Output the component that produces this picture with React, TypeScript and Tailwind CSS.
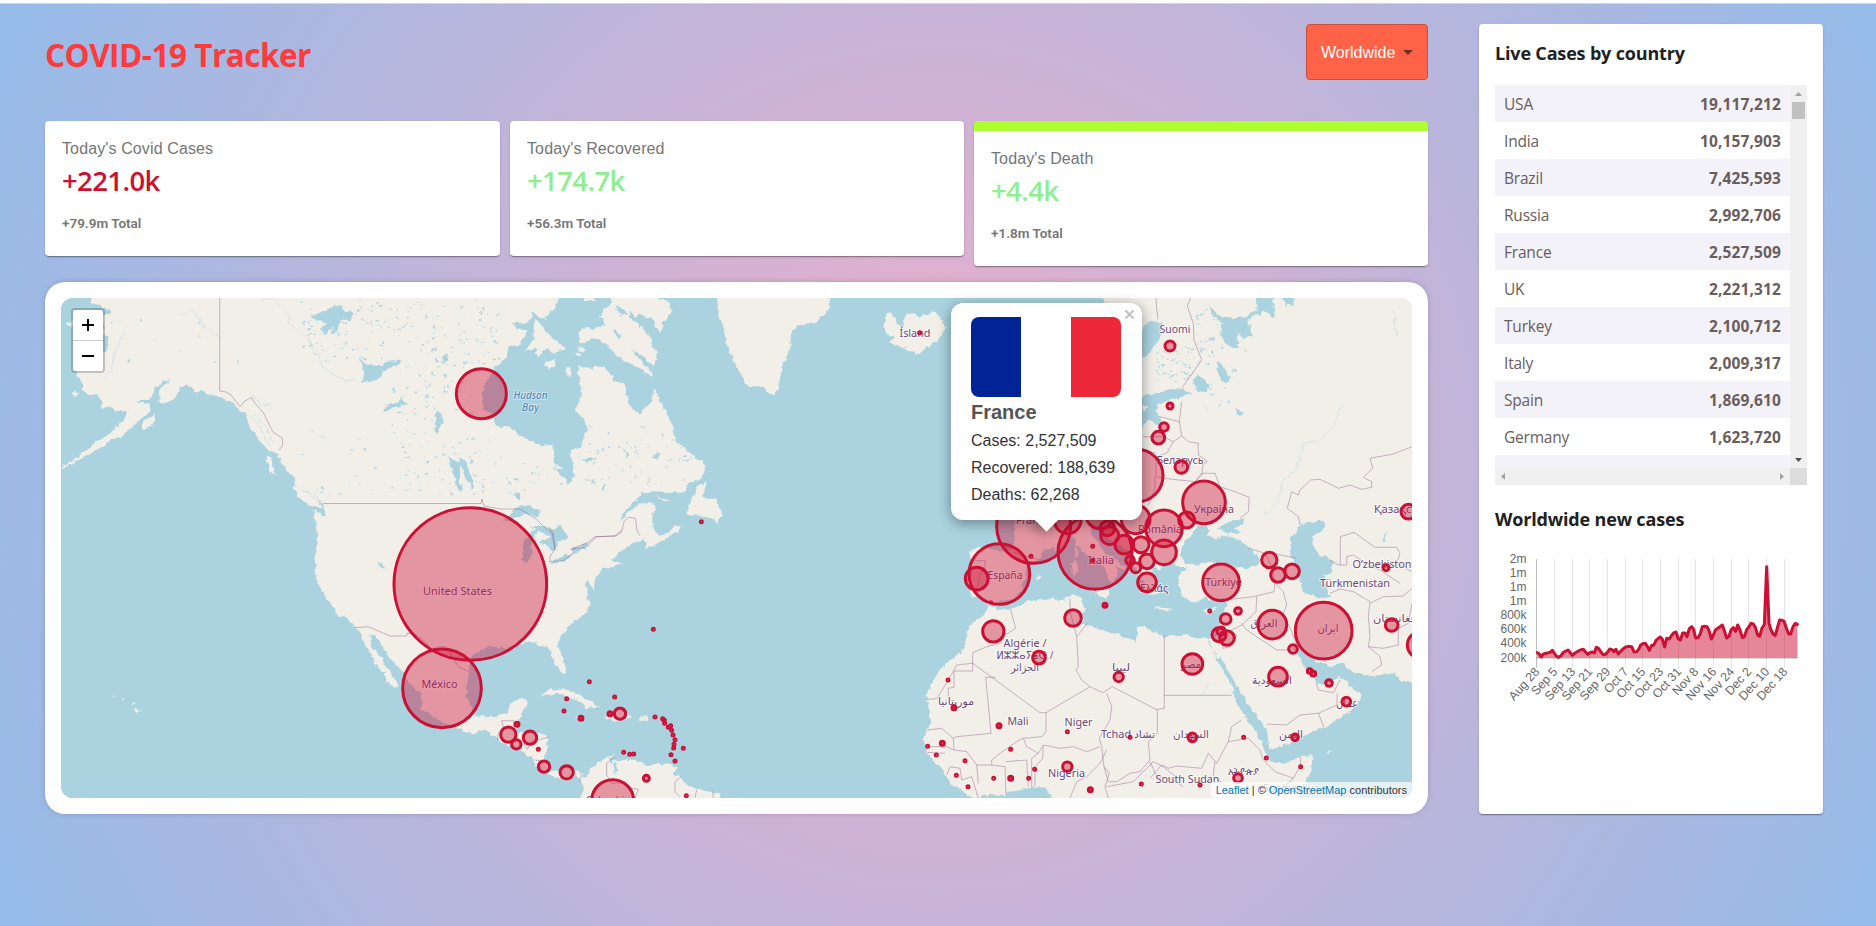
import React from "react";

const countries: [string, string][] = [
  ["USA", "19,117,212"],
  ["India", "10,157,903"],
  ["Brazil", "7,425,593"],
  ["Russia", "2,992,706"],
  ["France", "2,527,509"],
  ["UK", "2,221,312"],
  ["Turkey", "2,100,712"],
  ["Italy", "2,009,317"],
  ["Spain", "1,869,610"],
  ["Germany", "1,623,720"],
];

/* ---------- map geometry ---------- */
/* Shapes are listed per sheet. A sheet has an origin and is drawn at three units per pixel. */
type Sheet = keyof typeof sheets;
const sheets = {
  A: [40, 270],
  B: [440, 270],
  C: [240, 530],
  D: [900, 280],
  E: [1120, 290],
  F: [900, 520],
  G: [1150, 520],
  H: [30, 530],
};

function seg(s: Sheet, pts: string): string[] {
  const [ox, oy] = sheets[s];
  return pts
    .trim()
    .split(/\s+/)
    .map((p) => {
      const [x, y] = p.split(",").map(Number);
      return `${(ox + x / 3).toFixed(1)} ${(oy + y / 3).toFixed(1)}`;
    });
}
const area = (...parts: string[][]) => "M" + parts.flat().join("L") + "Z";
const line = (s: Sheet, pts: string) => "M" + seg(s, pts).join("L");

const americas = area(
  seg("A", "148,30 150,84 155,100 185,106 190,112 215,125 190,135 190,190 202,200 202,240 190,250 150,290 110,305 120,330 130,345 128,362 150,378 178,375 185,415 215,408 225,420 250,425 262,415 258,440 245,455 225,475 205,495 165,518 135,545 100,570 65,590 65,594 105,575 150,550 190,530 215,508 240,500 262,485 285,465 300,448 330,425 330,405 290,395 335,385 345,350 370,335 395,330 360,355 358,395 385,398 415,372 420,350 445,345 470,365 520,372 560,390 590,410 615,430 625,460 645,495 665,520 690,545 720,560 722,578 735,595 760,620 765,650 800,665 830,690 850,705 858,740 820,720 832,780 828,840"),
  seg("C", "222,70 225,130 233,160 245,180 258,200 275,225 290,252 315,262 345,285 355,305 375,345 398,372 400,395 435,430 440,455 455,462 465,478 475,472 472,460 460,445 445,420 425,385 410,370 395,345 388,312 410,315 420,335 432,362 450,385 475,410 490,432 500,450 540,490 548,515 545,535 570,555 600,573 630,585 665,600 700,610 735,598 770,625 790,640 830,655 850,665 880,690 890,710 925,730 935,740 955,740 985,752 1005,735 1020,745 1028,770 1025,830 1450,830 1440,790 1395,783 1370,780 1340,760 1325,740 1300,735 1310,715 1275,700 1230,705 1195,692 1160,685 1130,692 1112,700 1105,690 1128,672 1100,685 1070,700 1050,715 1042,740 1025,735 1000,718 975,712 955,725 935,718 915,695 918,660 925,625 900,610 870,607 840,612 825,605 830,590 842,560 845,545 860,525 862,508 830,508 808,520 800,550 770,560 740,562 715,558 700,545 682,500 680,450 690,420 688,395 700,378 735,355 765,350 790,360 830,345 870,335 905,345 925,350 935,375 945,400 965,430 977,428 975,400 955,350 960,320 985,290 1000,270 1030,260 1050,235 1052,215 1035,205 1050,195 1035,165 1042,150 1062,180 1065,145 1085,118 1120,108 1150,98 1118,92 1140,65 1175,45"),
  seg("B", "575,825 610,805 620,820 615,835 635,830 660,815 690,798 715,785 722,770 705,765 690,785 660,795 645,785 635,735 648,718 640,700 600,700 565,730 540,755 555,725 590,690 605,668 640,664 725,668 750,640 790,625 795,590 770,560 745,545 720,525 700,490 690,450 665,400 645,355 630,400 600,432 575,415 555,370 555,340 525,335 515,315 490,290 455,295 415,285 415,315 422,345 425,375 405,415 435,455 440,490 420,530 390,540 400,590 405,620 385,640 355,610 342,590 340,527 295,525 250,500 205,470 170,468 160,430 130,415 128,370 145,320 165,290 200,265 205,230 240,230 262,178 235,175 210,155 250,165 280,140 268,125 320,150 325,130 355,100 362,30"),
);

const oldWorld = area(
  seg("D", "600,20 612,60 620,110"),
  seg("E", "60,90 60,400 -20,560"),
  seg("F", "345,-30 345,60 335,90 300,92 240,82 212,92 212,110 225,118 215,150 205,190 215,225 240,235 262,248 265,258 250,285 205,320 200,365 180,400 140,425 110,465 85,510 78,540 90,570 90,620 68,655 80,685 90,715 120,740 150,785 180,810 215,834 235,838 270,822 300,828 345,810 400,802 440,803 460,850"),
  seg("G", "860,850 860,-760"),
);

const islands = [
  area(seg("A", "757,650 800,662 830,690 850,715 820,712 785,690")),
  area(seg("A", "675,560 695,560 697,590 710,617 690,600")),
  area(seg("A", "305,462 345,430 340,460 320,478 308,474")),
  area(seg("A", "90,370 105,362 120,372 105,380")),
  area(seg("A", "78,162 95,150 95,175")),
  area(seg("H", "315,530 333,540 318,552")),
  area(seg("H", "303,516 314,520 308,524")),
  area(seg("H", "275,502 285,507 277,511")),
  area(seg("H", "247,494 257,494 252,499")),
  area(seg("B", "285,150 275,215 258,245 290,235 292,262 320,235 345,248 375,238 350,215 320,185 300,155")),
  area(seg("B", "320,275 348,266 342,285 328,297 315,292")),
  area(seg("B", "380,290 393,295 387,318 376,305")),
  area(seg("B", "405,250 425,255 415,262")),
  area(seg("B", "410,228 438,245 430,252")),
  area(seg("B", "510,30 512,100 480,140 495,165 455,180 430,172 415,190 420,218 470,208 500,222 530,260 580,285 620,308 640,325 640,310 605,275 572,238 600,250 640,290 652,250 630,200 600,165 565,140 570,120 590,140 600,132 632,145 660,190 668,160 695,125 690,100 655,84 650,30")),
  area(seg("B", "428,30 475,30 465,92 435,95")),
  area(seg("B", "826,30 838,150 855,185 860,220 880,270 910,330 930,350 960,345 1000,382 1015,350 1030,275 1050,240 1055,180 1080,165 1130,155 1165,120 1180,30")),
  area(seg("B", "797,632 770,650 755,690 738,735 800,738 815,745 835,758 845,735 830,690 790,680 795,655")),
  area(seg("B", "645,676 690,692 672,697")),
  area(seg("B", "342,586 365,592 368,600 348,598")),
  area(seg("C", "900,500 925,480 965,475 1005,490 1050,515 1080,530 1035,535 1025,518 960,490 920,494")),
  area(seg("C", "1085,562 1118,565 1105,545 1125,540 1160,548 1180,560 1150,568 1125,575 1105,568")),
  area(seg("C", "1200,562 1222,562 1222,569 1200,569")),
  area(seg("C", "1008,562 1022,558 1038,566 1020,570")),
  area(seg("D", "-45,115 -30,95 -15,115 5,150 15,105 40,100 60,110 100,95 130,120 134,150 110,185 50,222 10,205 -30,190 -15,170 -45,160")),
];

const waters = [
  area(seg("F", "262,250 280,254 300,242 345,237 365,205 378,165 385,130 420,118 425,95 455,85 480,95 500,60 517,46 530,75 548,95 577,112 609,135 622,165 633,192 647,180 652,155 645,138 680,152 680,146 653,124 635,107 610,95 595,66 575,45 575,22 601,17 602,36 645,68 697,102 699,138 715,165 736,186 730,215 750,226 775,220 765,185 772,175 756,155 756,135 775,148 810,131 835,135 845,150 832,180 845,225 865,240"), seg("G", "115,240 140,248 165,230 195,245 225,235 232,260 215,290 205,330 195,350 170,355 140,355 100,345 60,345 40,350 0,330"), seg("F", "735,320 715,320 705,365 680,355 640,340 600,330 570,320 550,310 545,285 555,265 543,245 550,230 520,225 490,240 440,237 390,243 350,260 320,270 290,268 265,255")),
  area(seg("G", "90,110 95,85 105,60 125,45 145,15 165,15 185,30 170,45 195,55 215,48 240,50 275,65 300,85 325,110 328,135 290,145 250,140 215,130 180,125 140,138 105,128")),
  area(seg("E", "295,712 330,695 375,685 365,705 345,715 360,728 320,730")),
  area(seg("G", "80,140 110,142 108,150 85,150")),
  area(seg("G", "420,60 435,35 450,15 485,5 525,5 525,20 505,40 485,50 495,90 510,110 530,105 550,130 545,155 520,165 540,235 490,230 455,215 445,165 445,140 425,110")),
  area(seg("E", "60,330 80,315 130,305 185,293 215,312 170,325 120,338 105,360 122,385 120,410 80,390 60,420")),
  area(seg("G", "436,385 455,388 470,405 500,425 545,440 580,430 590,445 610,455 665,468 735,460 755,485 860,490 860,850 432,850 465,790 485,745 487,705 450,712 400,732 362,725 345,685 320,640 285,590 255,540 245,495 200,420 190,390 170,355 185,375 200,412 215,412 245,470 280,530 320,590 350,625 358,690 400,678 450,652 520,622 555,605 600,575 632,535 635,518 600,500 578,472 565,468 545,485 500,492 490,465 470,450 450,420")),
  area(seg("E", "60,210 60,120 85,98 130,95 115,150 85,195")),
  area(seg("E", "262,45 290,72 330,85 380,82 410,60 405,-20 455,-20 465,60 460,82 430,62 385,90 395,135 370,145 350,125 355,172 330,170 300,140 305,95 280,78")),
  area(seg("E", "475,-20 525,-20 520,48 495,45")),
  area(seg("E", "218,270 238,255 268,285 260,308 225,300")),
  area(seg("E", "295,210 320,245 328,275 315,280 292,245")),
  area(seg("E", "345,355 370,365 365,378 350,370")),
  area(seg("G", "700,60 712,30 705,65")),
  area(seg("A", "810,140 850,122 900,105 912,120 938,125 935,158 905,150 900,165 885,192 870,190 885,168 862,188 840,182 862,160 835,148")),
  area(seg("A", "960,268 1000,292 1040,275 1085,272 1075,282 1040,300 1010,330 960,342 975,318")),
  area(seg("A", "1028,422 1050,402 1085,388 1110,402 1060,412 1035,426")),
  area(seg("A", "1190,420 1210,450 1195,490 1185,485")),
  area(seg("A", "1205,265 1220,250 1225,270 1210,280")),
  area(seg("A", "1225,560 1260,580 1260,640 1240,610")),
  area(seg("B", "55,565 75,570 100,635 95,662 75,620")),
  area(seg("B", "30,595 50,615 70,660 60,662")),
  area(seg("B", "185,755 235,710 270,705 298,720 300,742 250,735 205,752")),
  area(seg("B", "270,770 300,770 340,780 365,765 385,805 350,812 350,840 290,815 340,800")),
  area(seg("C", "850,35 865,12 900,-10 872,45 876,75 860,100 846,85")),
  area(seg("C", "905,0 935,-5 960,10 945,55 930,62 932,20")),
  area(seg("C", "928,97 960,82 1000,72 975,92 940,102")),
  area(seg("C", "995,58 1020,48 1048,38 1035,58 1002,68")),
  area(seg("C", "415,98 425,98 436,118 428,118")),
  area(seg("C", "1117,702 1128,700 1132,720 1122,728")),
  area(seg("C", "725,358 760,350 790,352 800,362 760,385 700,395 690,388 700,372")),
  area(seg("B", "228,668 242,668 240,690 228,685")),
  area(seg("B", "530,105 562,130 540,140")),
  area(seg("B", "515,180 545,195 535,208")),
  area(seg("B", "480,655 498,640 485,665")),
  area(seg("B", "425,570 470,562 440,577")),
  area(seg("B", "548,540 568,555 560,562")),
  area(seg("B", "630,565 660,545 650,570")),
  area(seg("B", "725,575 768,560 735,575")),
];

const seaIslands = [
  area(seg("F", "575,207 605,205 628,203 620,238 585,220")),
  area(seg("F", "512,128 530,120 536,160 518,170")),
  area(seg("F", "522,88 532,84 532,112 524,110")),
  area(seg("F", "407,175 420,168 425,176 412,180")),
  area(seg("F", "765,262 815,266 812,272 768,268")),
  area(seg("G", "162,272 185,266 200,260 188,275 168,280")),
  area(seg("G", "525,697 545,695 535,702")),
  area(seg("E", "66,345 85,350 75,362")),
];

const borders = [
  line("A", "539,84 539,363 558,366 572,374 600,410 615,393 634,382 642,396 670,428 698,485 727,505 728,525 718,540"),
  "M323 503.500L481 503.500L482 499L484 506L500 509L520 509L536 519L543 526L552 533L555 550",
  line("B", "390,838 435,832 470,800 527,798 545,785 552,755 565,742 587,745 590,780 600,797"),
  line("C", "347,293 385,290 450,318 500,318 500,310 525,312 555,335 575,358 600,350 620,352 640,385 655,410 688,425"),
  line("C", "928,95 970,92 1000,70 998,55 1040,40 1065,20 1125,18 1145,0"),
  line("C", "925,-10 940,10 945,55 930,80 930,95"),
  line("C", "772,630 775,610 790,590 785,572 822,572 822,590"),
  line("C", "850,640 862,658 875,635 925,622"),
  line("C", "885,690 915,695"),
  line("C", "1025,735 1018,755"),
  line("C", "1125,680 1100,700 1100,735 1115,760 1150,758 1175,775 1195,778 1185,804"),
  line("C", "1325,740 1305,755 1305,785 1320,800"),
  line("C", "1370,780 1365,804"),
  line("C", "1418,785 1420,804"),
  line("D", "768,54 770,85 774,118"),
  line("D", "872,54 862,78 880,130 882,180 905,240 845,325"),
  line("E", "185,335 178,395 120,380"),
  line("E", "178,395 185,438 160,455 130,440 70,440"),
  line("E", "160,455 140,490 108,500 108,560 130,565 225,575 245,555 248,525 262,515 235,495 235,460 205,455 185,438"),
  line("E", "225,575 245,550 285,550 300,590 345,605 388,622 385,665 360,685"),
  line("E", "85,645 105,595 105,560"),
  line("E", "66,478 108,490"),
  line("E", "540,705 535,680 502,655 515,605 535,615 540,600 572,570 600,568 655,595 690,585 725,598 755,592 755,575 730,562 758,535 750,505 820,492 876,470"),
  line("G", "571,135 571,50 612,37 675,82 740,82 750,100 740,130 785,155"),
  line("G", "540,120 565,135 590,135 590,110 610,105 640,125 690,150 750,190"),
  line("G", "540,220 570,207 610,215 660,245 655,290 660,350 655,380 690,410 695,435 665,455"),
  line("G", "655,380 700,385 745,375 745,325 775,310 786,250"),
  line("G", "660,250 700,230 760,228 786,205"),
  line("G", "296,85 345,100 365,140 375,190 372,215 310,230 240,238"),
  line("G", "345,95 440,115"),
  line("G", "375,190 400,215 410,255 400,280 425,335 440,375 430,390"),
  line("G", "320,230 318,275 275,315 215,345 218,385 240,380 260,345 245,335"),
  line("G", "275,310 290,330 380,390 425,390"),
  line("G", "500,490 505,510 550,518 570,480"),
  line("G", "350,612 410,615 450,585 505,580 560,555 562,520"),
  line("G", "505,580 522,622"),
  line("G", "43,345 43,565 22,568 22,640"),
  line("G", "43,526 245,526"),
  line("G", "275,600 245,620 235,665 200,730 175,700 155,745 80,738 55,745 35,735 0,775"),
  line("G", "235,665 295,655 330,690 340,720 375,755 430,775 452,735 452,710"),
  line("G", "195,725 190,765 240,810"),
  line("G", "430,775 390,810"),
  line("G", "0,725 20,770 60,775 100,800"),
  line("F", "225,122 255,122 255,145 240,165 230,210"),
  line("F", "340,95 380,110 425,120"),
  line("F", "332,270 347,325 315,345 300,370 260,380 218,398 218,453 162,453 162,502 145,505 145,530"),
  line("F", "78,538 110,536 145,480 170,435 218,430 420,578 438,578 570,500 608,518 637,500 772,570"),
  line("F", "510,235 510,275 520,310 530,350 562,310"),
  line("F", "530,350 535,440 528,450 545,480 570,500"),
  line("F", "772,640 745,665 750,720 720,755 690,760 650,785 625,785 612,740 605,680 598,655 630,600 635,560 620,520"),
  line("F", "257,472 273,640 170,650 160,655 125,625 82,630"),
  line("F", "257,472 288,472"),
  line("F", "438,578 438,635 425,650 370,655 350,665 300,700 275,720 275,735 230,735 200,695 162,690 160,655"),
  line("F", "370,655 380,680 415,700 430,675 480,685 520,680 560,695 600,680"),
  line("F", "415,700 395,715 395,800"),
  line("F", "275,735 315,740 318,825"),
  line("F", "318,725 380,720 385,800"),
  line("F", "430,680 428,715 405,740 405,800"),
  line("F", "82,680 140,680 160,690"),
  line("F", "80,697 135,700"),
  line("F", "140,765 150,740 180,745 185,780 215,770 235,834"),
  line("F", "230,735 235,790"),
  line("F", "620,690 600,730 560,770 530,785 510,834"),
  line("F", "612,740 628,760 615,800 625,834"),
  line("F", "620,800 700,785 760,725 790,740 840,780"),
];

/* Small lakes scattered over the northern lake districts. */
function lakes(seed: number, n: number, x0: number, y0: number, w: number, h: number) {
  let s = seed;
  const rnd = () => {
    s = (s * 16807) % 2147483647;
    return s / 2147483647;
  };
  let d = "";
  for (let i = 0; i < n; i++) {
    const x = x0 + rnd() * w;
    const y = y0 + rnd() * h;
    const a = 0.6 + rnd() * 2.2;
    const b = 0.4 + rnd() * 1.1;
    const t = rnd() * 1.6 - 1;
    d += `M${x.toFixed(1)} ${y.toFixed(1)}l${a.toFixed(1)} ${t.toFixed(1)}l${b.toFixed(1)} ${b.toFixed(1)}l${(-a).toFixed(1)} ${(0.4 - t).toFixed(1)}z`;
  }
  return d;
}
const lakeDots = [
  lakes(11, 60, 300, 300, 75, 60),
  lakes(23, 110, 375, 300, 125, 65),
  lakes(5, 60, 385, 365, 90, 60),
  lakes(37, 60, 390, 430, 100, 65),
  lakes(91, 80, 560, 425, 125, 60),
  lakes(77, 30, 470, 455, 80, 40),
  lakes(13, 70, 1155, 345, 38, 35),
  lakes(17, 40, 1195, 310, 25, 55),
  lakes(61, 16, 1200, 340, 60, 70),
  lakes(41, 14, 90, 305, 150, 60),
  lakes(71, 18, 300, 430, 90, 70),
].join("");

const rivers = [
  line("A", "665,90 700,85 750,140 745,160 800,200 840,260 845,290 900,325 950,335"),
  line("A", "420,135 460,122 490,165 540,200"),
  line("A", "260,170 240,215 220,260 215,300 180,340"),
  line("A", "810,475 830,500 855,500"),
  line("A", "635,365 655,400 690,405"),
  line("A", "620,430 650,460 670,490 690,530"),
  line("A", "640,430 680,470 700,520"),
  line("A", "820,670 835,690 850,700"),
  line("E", "430,675 470,640 490,570 530,540 540,500 550,460 600,450 640,405 670,335"),
  line("E", "820,60 830,140"),
  line("G", "150,530 175,490"),
];

/* sheet, x, y, radius (sheet units) */
const spots: [Sheet, number, number, number][] = [
  ["C", 691, 162, 229], ["C", 606, 475, 118], ["C", 805, 614, 23], ["C", 829, 643, 14], ["C", 870, 623, 20],
  ["C", 831, 583, 6], ["C", 895, 658, 3], ["C", 912, 710, 17], ["C", 980, 727, 20], ["C", 1118, 812, 63],
  ["C", 1219, 745, 9], ["C", 1339, 797, 3], ["C", 1240, 298, 3], ["C", 1048, 455, 3], ["C", 1124, 501, 3],
  ["C", 980, 506, 3], ["C", 972, 543, 3], ["C", 1023, 565, 6], ["C", 1110, 551, 6], ["C", 1140, 551, 17],
  ["C", 1245, 561, 3], ["C", 1268, 566, 3], ["C", 1273, 571, 3], ["C", 1274, 580, 3], ["C", 1285, 592, 3],
  ["C", 1292, 587, 3], ["C", 1295, 601, 3], ["C", 1299, 615, 3], ["C", 1305, 629, 3], ["C", 1302, 643, 3],
  ["C", 1301, 654, 3], ["C", 1330, 655, 3], ["C", 1293, 674, 3], ["C", 1305, 693, 3], ["C", 1151, 667, 3],
  ["C", 1169, 673, 3], ["C", 1181, 672, 3], ["B", 124, 371, 75], ["B", 784, 755, 3],
  ["D", 59, 158, 3], ["D", 810, 198, 15], ["D", 810, 378, 9], ["D", 792, 441, 13], ["D", 775, 473, 19],
  ["D", 710, 587, 79], ["D", 844, 561, 19], ["E", 252, 637, 64], ["E", 200, 690, 24], ["E", 132, 715, 55],
  ["E", 865, 665, 22], ["F", 401, 19, 111], ["F", 298, 162, 91], ["F", 230, 176, 34], ["F", 585, 97, 111],
  ["F", 503, 1, 40], ["F", 600, -16, 42], ["F", 707, -2, 43], ["F", 622, 25, 22], ["F", 629, 47, 27],
  ["F", 673, 74, 28], ["F", 723, 74, 24], ["F", 741, 124, 22], ["F", 707, 143, 15], ["F", 690, 121, 13],
  ["F", 792, 97, 37], ["F", 741, 187, 28], ["F", 519, 294, 25], ["F", 280, 334, 32], ["F", 417, 413, 19],
  ["F", 656, 471, 14], ["F", 615, 256, 6], ["F", 393, 109, 3], ["F", 578, 79, 3], ["F", 578, 122, 3],
  ["F", 144, 480, 3], ["F", 162, 563, 6], ["F", 297, 617, 6], ["F", 127, 670, 6], ["F", 83, 679, 3],
  ["F", 109, 705, 3], ["F", 195, 722, 3], ["F", 332, 688, 3], ["F", 169, 766, 3], ["F", 204, 800, 3],
  ["F", 281, 775, 3], ["F", 332, 775, 6], ["F", 386, 775, 3], ["F", 404, 748, 3], ["F", 502, 740, 14],
  ["F", 502, 635, 3], ["F", 690, 652, 3], ["F", 571, 809, 6], ["F", 724, 792, 3], ["F", 273, 247, 2],
  ["G", 213, 187, 55], ["G", 358, 120, 23], ["G", 384, 165, 22], ["G", 426, 154, 22], ["G", 521, 332, 85],
  ["G", 367, 314, 43], ["G", 429, 387, 13], ["G", 227, 297, 16], ["G", 264, 273, 10], ["G", 179, 273, 3],
  ["G", 207, 344, 21], ["G", 231, 354, 22], ["G", 213, 333, 12], ["G", 127, 432, 31], ["G", 384, 470, 28],
  ["G", 479, 453, 7], ["G", 490, 461, 7], ["G", 537, 489, 10], ["G", 589, 545, 13], ["G", 435, 652, 10],
  ["G", 127, 652, 13], ["G", 281, 652, 3], ["G", 349, 714, 3], ["G", 452, 740, 3], ["G", 264, 774, 13],
  ["G", 150, 795, 3], ["G", 708, 143, 9], ["G", 725, 315, 19], ["G", 812, 375, 40],
];

/* text, centre x, baseline y, drawn width */
const labels: [string, number, number, number][] = [
  ["United States", 457.5, 594.5, 69],
  ["México", 439.5, 688, 36],
  ["Colombia", 608, 804, 44],
  ["Ísland", 915, 337, 31],
  ["Suomi", 1175, 333, 31],
  ["Беларусь", 1180, 464, 47],
  ["Україна", 1214, 513, 40],
  ["România", 1160, 533, 44],
  ["Қазақстан", 1402, 513, 56],
  ["France", 1033, 524, 34],
  ["España", 1005, 579, 35],
  ["Italia", 1101, 564, 26],
  ["Ελλάς", 1154, 592, 28],
  ["Türkiye", 1223.5, 586, 37],
  ["O‘zbekiston", 1382, 568, 59],
  ["Türkmenistan", 1355, 586.5, 70],
  ["Algérie /", 1025, 647, 43],
  ["ⵍⵣⵣⴰⵢⴻⵔ /", 1025, 659, 57],
  ["الجزائر", 1025, 671, 28],
  ["ليبيا", 1121, 671, 18],
  ["موريتانيا", 956, 705, 36],
  ["Mali", 1018, 725, 21],
  ["Niger", 1078.5, 725.5, 28],
  ["Tchad تشاد", 1128, 738, 54],
  ["Nigeria", 1066.5, 776.5, 37],
  ["السودان", 1191, 738, 36],
  ["South Sudan", 1187.5, 783, 64],
  ["አትዮጵያ", 1243.5, 775, 31],
  ["اليمن", 1291, 738, 24],
  ["السعودية", 1272, 684, 40],
  ["عمان", 1347, 707, 22],
  ["مصر", 1191, 668, 20],
  ["العراق", 1264, 627, 27],
  ["ایران", 1328, 632, 21],
  ["افغانستان", 1396, 622, 46],
  ["Soomaaliya", 1291, 792, 56],
];

function MapLayer() {
  return (
    <svg className="block h-full w-full" viewBox="61 298 1351 500" preserveAspectRatio="none">
      <defs>
        <filter id="coast" x="0" y="0" width="1" height="1" filterUnits="objectBoundingBox">
          <feTurbulence type="fractalNoise" baseFrequency="0.16" numOctaves="3" seed="4" result="n" />
          <feDisplacementMap in="SourceGraphic" in2="n" scale="6" xChannelSelector="R" yChannelSelector="G" />
        </filter>
      </defs>
      <g filter="url(#coast)">
        <rect x="41" y="278" width="1391" height="540" fill="#aad3df" />
        <path d={americas + oldWorld + islands.join("")} fill="#f2efe9" />
        <path d={waters.join("")} fill="#aad3df" />
        <path d={seaIslands.join("")} fill="#f2efe9" />
        <path d={lakeDots} fill="#aad3df" />
        <path d={rivers.join("")} fill="none" stroke="#c4dde3" strokeWidth="0.7" />
      </g>
      <path d={borders.join("")} fill="none" stroke="#8d618b" strokeOpacity="0.5" strokeWidth="0.9" strokeLinejoin="round" />
      <g fontFamily="'Noto Sans','DejaVu Sans',sans-serif" fontSize="10.5" textAnchor="middle" fill="#6c4675" stroke="#ffffff" strokeOpacity="0.65" strokeWidth="2" paintOrder="stroke" strokeLinejoin="round">
        {labels.map(([t, x, y, w]) => (
          <text key={t} x={x} y={y} textLength={w} lengthAdjust="spacingAndGlyphs">
            {t}
          </text>
        ))}
        <g fill="#4d80b3" fontStyle="italic" strokeOpacity="0.4" fontSize="10">
          <text x="530.5" y="398.500" textLength="34">Hudson</text>
          <text x="530.5" y="410.500" textLength="17">Bay</text>
        </g>
      </g>
      <g fill="#cc1034" fillOpacity="0.4" stroke="#cc1034" strokeWidth="3">
        {spots.map(([s, x, y, r], i) => (
          <circle key={i} cx={sheets[s][0] + x / 3} cy={sheets[s][1] + y / 3} r={r / 3} />
        ))}
      </g>
    </svg>
  );
}

/* ---------- chart ---------- */
const series =
  "232,518 238,522 244,531 250,522 262,519 270,517 277,511 284,521 290,529 296,532 303,527 310,517 318,513 324,510 330,517 337,526 345,519 355,513 364,509 370,508 376,515 383,523 390,518 398,516 403,519 409,502 416,506 423,516 430,524 437,523 443,516 449,507 456,509 462,515 468,508 475,522 482,514 490,506 497,501 505,499 515,500 522,516 530,515 536,508 542,495 549,491 556,490 562,499 568,511 575,496 581,496 588,481 595,475 601,471 607,478 614,501 620,475 628,477 635,466 641,459 648,456 655,477 661,480 668,459 675,459 681,470 688,446 695,440 701,449 707,474 714,473 721,461 727,440 734,439 741,440 747,452 754,477 760,465 767,449 780,440 787,435 793,452 800,474 807,469 813,450 820,443 827,454 833,435 840,450 847,473 853,470 860,449 867,440 873,430 880,432 886,442 893,465 899,469 906,444 913,434 920,260 927,430 933,450 940,463 946,466 953,440 959,420 966,421 972,424 979,444 986,462 992,462 999,440 1006,430 1012,433"
    .split(" ")
    .map((p) => p.split(",").map((n) => Number(n) / 3));
const seriesPath = "M" + series.map(([x, y]) => `${x.toFixed(2)} ${y.toFixed(2)}`).join("L");
const yTicks: [string, number][] = [
  ["2m", 79], ["1m", 93], ["1m", 107], ["1m", 121], ["800k", 135], ["600k", 149], ["400k", 163], ["200k", 178],
];
const xTicks: [string, number][] = [
  ["Aug 28", 76.5], ["Sep 5", 94.5], ["Sep 13", 112.5], ["Sep 21", 129.5], ["Sep 29", 147.5],
  ["Oct 7", 165.5], ["Oct 15", 182.5], ["Oct 23", 200.5], ["Oct 31", 218.5], ["Nov 8", 235.5],
  ["Nov 16", 253.5], ["Nov 24", 271.5], ["Dec 2", 288.5], ["Dec 10", 306.5], ["Dec 18", 324.5],
];

function Chart() {
  return (
    <svg className="block h-[156px] w-[312px]" viewBox="35 70 312 156">
      {xTicks.map(([t, x], i) => (
        <line key={t} x1={x} x2={x} y1="79" y2="188" stroke="#000" strokeOpacity={i === 0 ? 0.25 : 0.1} />
      ))}
      <line x1="76" x2="338" y1="178.500" y2="178.500" stroke="#000" strokeOpacity="0.15" />
      <path d={`${seriesPath}L337.500 178L77 178Z`} fill="#cc1034" fillOpacity="0.5" />
      <path d={seriesPath} fill="none" stroke="#cc1034" strokeWidth="3" strokeLinejoin="round" strokeLinecap="round" />
      <g fontFamily="'Liberation Sans',Arial,sans-serif" fontSize="12" fill="#666" textAnchor="end">
        {yTicks.map(([t, y]) => (
          <text key={y} x="66.500" y={y + 4}>
            {t}
          </text>
        ))}
        {xTicks.map(([t, x]) => (
          <text key={t} transform={`translate(${x + 0.5} 189.500) rotate(-48)`} y="4" fontSize="12.3">
            {t}
          </text>
        ))}
      </g>
    </svg>
  );
}

/* ---------- widgets ---------- */
const cardShadow =
  "shadow-[0px_2px_1px_-1px_rgba(0,0,0,0.2),0px_1px_1px_0px_rgba(0,0,0,0.14),0px_1px_3px_0px_rgba(0,0,0,0.12)]";

function InfoBox(props: { title: string; value: string; total: string; red?: boolean; active?: boolean }) {
  return (
    <div
      className={`rounded bg-white pt-4 pl-[17px] ${cardShadow} ${
        props.active ? "h-[145px] border-t-10 border-[#adff2f]" : "h-[135px]"
      }`}
    >
      <div className="font-['Liberation_Sans',Arial,sans-serif] text-base leading-6 tracking-[0.12px] text-[#757575]">
        {props.title}
      </div>
      <div
        className={`pt-[3px] font-['Open_Sans',sans-serif] text-[27.5px] leading-[34px] font-semibold tracking-[-0.6px] ${
          props.red ? "text-[#cc1034]" : "text-[#90ee90]"
        }`}
      >
        {props.value}
      </div>
      <div className="mt-[15px] font-['Roboto',sans-serif] text-[13.5px] leading-5 font-semibold text-[#757575]">
        {props.total}
      </div>
    </div>
  );
}

function CountryTable() {
  return (
    <div className="grid h-[400px] w-[312px] grid-cols-[295px_17px] grid-rows-[383px_17px] bg-[#f0f0f0]">
      <div className="overflow-hidden bg-white font-['Open_Sans',sans-serif] text-[#6a5d5d]">
        {countries.map(([name, cases]) => (
          <div key={name} className="flex h-[37px] items-center justify-between px-[9px] pt-[3px] odd:bg-[#f3f2f8]">
            <span className="text-[15.5px] tracking-[-0.2px]">{name}</span>
            <span className="text-[15.5px] font-bold tracking-[0.12px]">{cases}</span>
          </div>
        ))}
        <div className="h-[37px] bg-[#f3f2f8]" />
      </div>
      <div className="flex flex-col items-center justify-between pt-[7px] pb-[6px]">
        <div className="flex flex-col items-center">
          <svg className="block h-1 w-[7px]" viewBox="0 0 7 4">
            <path d="M0 4L3.500 0L7 4Z" fill="#a3a3a3" />
          </svg>
          <div className="mt-1.5 h-[17px] w-[13px] bg-[#c1c1c1]" />
        </div>
        <svg className="block h-1 w-[7px]" viewBox="0 0 7 4">
          <path d="M0 0L3.500 4L7 0Z" fill="#505050" />
        </svg>
      </div>
      <div className="flex items-center justify-between px-1.5">
        <svg className="block h-[7px] w-1" viewBox="0 0 4 7">
          <path d="M4 0L0 3.500L4 7Z" fill="#a3a3a3" />
        </svg>
        <svg className="block h-[7px] w-1" viewBox="0 0 4 7">
          <path d="M0 0L4 3.500L0 7Z" fill="#a3a3a3" />
        </svg>
      </div>
      <div className="bg-[#dcdcdc]" />
    </div>
  );
}

function Popup() {
  return (
    <div className="absolute top-[5px] left-[890px] w-[191px] font-['Liberation_Sans',Arial,sans-serif] text-[#333]">
      <div className="absolute top-[208px] left-[87px] h-[17px] w-[17px] rotate-45 bg-white shadow-[0_3px_14px_rgba(0,0,0,0.4)]" />
      <div className="relative h-[217px] rounded-xl bg-white px-5 pt-3.5 shadow-[0_3px_14px_rgba(0,0,0,0.4)]">
        <div className="flex h-20 w-[150px] overflow-hidden rounded-lg">
          <div className="flex-1 bg-[#002395]" />
          <div className="flex-1 bg-white" />
          <div className="flex-1 bg-[#ed2939]" />
        </div>
        <div className="text-xl leading-[30px] font-bold text-[#555]">France</div>
        <div className="text-base leading-[27px]">
          <div>Cases: 2,527,509</div>
          <div>Recovered: 188,639</div>
          <div>Deaths: 62,268</div>
        </div>
        <svg className="absolute top-[7px] right-[7.5px] h-[9px] w-[11px]" viewBox="0 0 11 9">
          <path d="M1.500 0.500L9.500 8.500M9.500 0.500L1.500 8.500" stroke="#c3c3c3" strokeWidth="2.2" />
        </svg>
      </div>
      <div className="absolute top-[208px] left-[87px] h-[17px] w-[17px] rotate-45 bg-white" />
    </div>
  );
}

export default function App() {
  return (
    <div className="flex h-[926px] w-[1876px] flex-col overflow-hidden bg-white">
      <div className="h-1 shrink-0 border-b border-[#d5d5de] bg-white" />
      <div className="flex flex-1 items-start gap-[51px] bg-[radial-gradient(circle,rgba(238,174,202,1)_0%,rgba(148,187,233,1)_100%)] pt-5 pl-[45px]">
        <main className="w-[1383px]">
          <header className="flex h-14 items-center justify-between">
            <h1 className="pt-1.5 font-['Open_Sans',sans-serif] text-[31.5px] leading-none font-bold tracking-[-0.5px] text-[#ff3a3a]">
              COVID-19 Tracker
            </h1>
            <button className="flex h-14 w-[122px] items-center rounded border border-[#c9503a] bg-[#ff6347] pl-[14px] font-['Liberation_Sans',Arial,sans-serif] text-base text-white">
              <span className="pt-0.5">Worldwide</span>
              <svg className="ml-2 h-[5px] w-[10px]" viewBox="0 0 10 5">
                <path d="M0 0L5 5L10 0Z" fill="#752d20" />
              </svg>
            </button>
          </header>
          <section className="mt-[41px] grid h-[161px] grid-cols-[455px_454px_454px] items-start gap-2.5">
            <InfoBox title="Today's Covid Cases" value="+221.0k" total="+79.9m Total" red />
            <InfoBox title="Today's Recovered" value="+174.7k" total="+56.3m Total" />
            <InfoBox title="Today's Death" value="+4.4k" total="+1.8m Total" active />
          </section>
          <section className="h-[532px] rounded-[20px] bg-white p-4 shadow-[0_0_8px_-4px_rgba(0,0,0,0.5)]">
            <div className="relative h-[500px] w-[1351px]">
              <div className="h-full w-full overflow-hidden rounded-[12px] bg-[#aad3df]">
                <MapLayer />
              </div>
              <div className="absolute top-2.5 left-2.5 flex w-[34px] flex-col rounded border-2 border-black/20 bg-clip-padding">
                <div className="flex h-[31px] items-center justify-center rounded-t-xs border-b border-[#ccc] bg-white">
                  <svg className="h-3 w-3" viewBox="0 0 12 12">
                    <path d="M6 0V12M0 6H12" stroke="#000" strokeWidth="2" />
                  </svg>
                </div>
                <div className="flex h-[30px] items-center justify-center rounded-b-xs bg-white">
                  <svg className="h-3 w-3" viewBox="0 0 12 12">
                    <path d="M0 6H12" stroke="#000" strokeWidth="2" />
                  </svg>
                </div>
              </div>
              <div className="absolute right-0 bottom-0 h-4 rounded-br-[12px] bg-white/70 px-[5px] font-['Liberation_Sans',Arial,sans-serif] text-[11px] leading-4 whitespace-nowrap text-[#333]">
                <span className="text-[#0078a8]">Leaflet</span> | © <span className="text-[#0078a8]">OpenStreetMap</span>{" "}
                contributors
              </div>
              <Popup />
            </div>
          </section>
        </main>
        <aside className={`h-[790px] w-[344px] rounded bg-white px-4 ${cardShadow}`}>
          <h3 className="pt-[15px] font-['Open_Sans',sans-serif] text-[18px] leading-[28px] font-bold tracking-[-0.17px] text-[#212121]">
            Live Cases by country
          </h3>
          <div className="mt-[18px]">
            <CountryTable />
          </div>
          <h3 className="mt-5 mb-[17px] font-['Open_Sans',sans-serif] text-[18px] leading-[28px] font-bold tracking-[-0.17px] text-[#212121]">
            Worldwide new cases
          </h3>
          <Chart />
        </aside>
      </div>
    </div>
  );
}
